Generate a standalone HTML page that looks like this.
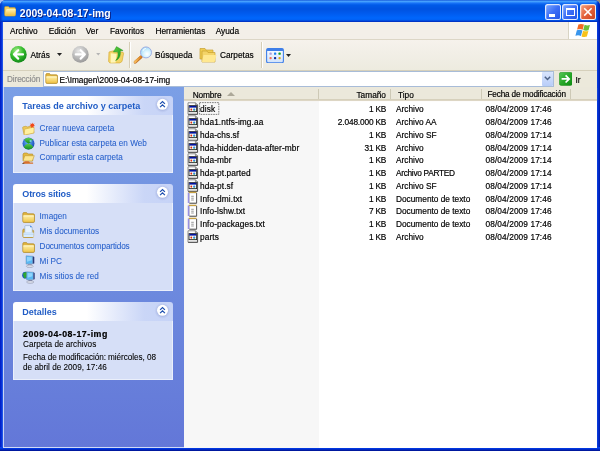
<!DOCTYPE html>
<html><head><meta charset="utf-8">
<style>
*{box-sizing:border-box}
html,body{margin:0;padding:0;width:600px;height:451px;overflow:hidden;background:linear-gradient(to right,#a8c0f0,#8c8c8c)}
body{position:relative;font-family:"Liberation Sans", sans-serif;-webkit-font-smoothing:antialiased}
.tx,.tt,.mt{-webkit-text-stroke:0.18px currentColor}
.lk{-webkit-text-stroke:0.06px currentColor}
.dt{-webkit-text-stroke:0.08px currentColor}
.a{position:absolute}
.win{position:absolute;left:0;top:0;width:600px;height:451px;will-change:transform;background:#0046d8;border-radius:6px 6px 0 0;overflow:hidden}
.title{position:absolute;left:0;top:0;width:600px;height:22px;
 background:linear-gradient(to bottom,#1a5edc 0px,#48a4ff 1.6px,#1a74f8 3px,#005ae8 5px,#0052e0 9px,#005cf0 14px,#0066fc 18px,#0060f4 20px,#0036c8 21.2px,#0030c0 22px)}
.ttext{position:absolute;left:19.8px;top:7.7px;font-size:10.4px;font-weight:bold;color:#fff;line-height:12px;text-shadow:1px 1px 0 #0a1e80;letter-spacing:0.05px}
.lb{position:absolute;left:0;top:22px;width:3px;height:429px;background:linear-gradient(to right,#0019c0,#0a3ce0 70%,#3a70f0)}
.rb{position:absolute;left:597px;top:22px;width:3px;height:429px;background:linear-gradient(to right,#0a40e0,#0028c8 60%,#001aa0)}
.bb{position:absolute;left:0;top:447px;width:600px;height:4px;background:linear-gradient(to bottom,#0a48f4,#0034dc 45%,#00108c)}
.menu{position:absolute;left:3px;top:22px;width:594px;height:17px;background:#f3efe8}
.menuline{position:absolute;left:3px;top:39px;width:594px;height:1px;background:#dcd6c6;box-shadow:0 1px 0 #fbf9f4}
.logo{position:absolute;left:568px;top:22px;width:29px;height:17px;background:#fff;border-left:1px solid #d8d4c4}
.mt{position:absolute;top:25px;font-size:8.3px;color:#000;line-height:12px}
.tool{position:absolute;left:3px;top:40px;width:594px;height:30px;background:linear-gradient(to bottom,#f6f2ec,#f2efe7 40%,#edebdf)}
.toolline{position:absolute;left:3px;top:69.5px;width:594px;height:1px;background:#d6d0bb}
.addr{position:absolute;left:3px;top:70.5px;width:594px;height:16.5px;background:#ece9db}
.abox{position:absolute;left:43px;top:71px;width:510.5px;height:15.5px;background:#fff;border:1px solid #a8bcd8}
.tt{position:absolute;font-size:8.3px;color:#000;line-height:12px}
.left{position:absolute;left:4px;top:87px;width:180px;height:360.5px;background:linear-gradient(to bottom,#7b9fe6,#7090e0 40%,#6377d8)}
.leftline{position:absolute;left:3px;top:87px;width:1px;height:361px;background:#c8d4f4}
.botline{position:absolute;left:3px;top:447px;width:181px;height:1px;background:#d0daf6}
.box{position:absolute;left:13px;width:160px;border-radius:3px 3px 0 0;overflow:hidden}
.bh{position:absolute;left:0;top:0;width:160px;height:19px;background:linear-gradient(to right,#fff 0%,#fff 46%,#cad6f7 82%,#c6d3f7 100%)}
.bt{position:absolute;left:9.3px;top:4.4px;font-size:9px;font-weight:bold;color:#215dc6;line-height:12px}
.bbody{position:absolute;left:0;top:19px;width:160px;background:#d6dff7;border:1px solid #eaeffb;border-top:none}
.chev{position:absolute;left:143.5px;top:3px;width:11.5px;height:11.5px;border-radius:50%;background:#fff;box-shadow:0 0.5px 1.5px rgba(80,100,170,.55)}
.lk{position:absolute;left:27px;font-size:8.2px;color:#2760cc;line-height:12px;white-space:nowrap}
.dt{position:absolute;left:10px;font-size:8.2px;color:#000;line-height:12px;white-space:nowrap}
.list{position:absolute;left:184px;top:87px;width:413px;height:360.5px;background:#fff}
.sortcol{position:absolute;left:184px;top:101px;width:135px;height:346.5px;background:#f7f7f7}
.hdr{position:absolute;left:184px;top:87px;width:413px;height:13.3px;background:#ebe8db;border-bottom:1px solid #d6d0bc;box-shadow:0 0.8px 0.6px #ddd6c4}
.hsep{position:absolute;top:89px;width:1px;height:10px;background:#cdc9b6}
.tx{position:absolute;font-size:8.3px;color:#000;line-height:12.75px;white-space:nowrap}
.r{text-align:right}
.ic{position:absolute;left:187.2px;width:12px;height:13px}
.ic svg{display:block}
.btn{position:absolute;top:4px;width:16px;height:16px;border-radius:2.5px;border:1px solid rgba(255,255,255,0.85);box-shadow:inset 0.5px 0.5px 0.5px rgba(255,255,255,0.35)}
</style></head><body>
<div class="win">
 <div class="title"></div>
 <div class="a" style="left:0;top:0;width:2.5px;height:22px;background:linear-gradient(to right,#0030c8,rgba(0,60,220,0))"></div>
 <div class="a" style="left:595.5px;top:0;width:4.5px;height:22px;background:linear-gradient(to right,rgba(0,40,200,0),#0028c0 60%,#0018a0)"></div>
 <div class="lb"></div><div class="rb"></div><div class="bb"></div>
 <!-- title icon -->
 <svg class="a" style="left:4.3px;top:6.3px" width="12" height="10.5" viewBox="0 0 12 10.5"><defs><linearGradient id="gtf" x1="0" y1="0" x2="0" y2="1"><stop offset="0" stop-color="#fff4b8"/><stop offset="1" stop-color="#f0c040"/></linearGradient></defs><path d="M0.6 8.8v-7.2q0-1.1 1-1.1h2.8l1 1.1h4.8q1.3 0 1.3 1.2v6q0 1.3-1.3 1.3h-8.3q-1.3 0-1.3-1.3z" fill="#f4d060" stroke="#c89a28" stroke-width="0.6"/><path d="M1.2 9.5l1-5.8q0.2-0.8 1-0.8h7.8q0.9 0 0.8 0.9l-0.6 5.7z" fill="url(#gtf)"/></svg>
 <div class="ttext">2009-04-08-17-img</div>
 <div class="btn" style="left:545px;background:linear-gradient(135deg,#7aa6ff,#3c6ef6 50%,#2456e6)"><div class="a" style="left:3.3px;top:9.2px;width:5.6px;height:2.4px;background:#fff"></div></div>
 <div class="btn" style="left:562px;background:linear-gradient(135deg,#7aa6ff,#3c6ef6 50%,#2456e6)"><div class="a" style="left:3px;top:2.5px;width:8.5px;height:8.5px;border:1px solid #fff;border-top-width:2px"></div></div>
 <div class="btn" style="left:580px;background:linear-gradient(135deg,#f4a07e,#e4623a 50%,#cc4420)"><svg class="a" style="left:2.3px;top:2.3px" width="10" height="10" viewBox="0 0 10 10"><path d="M1.2 1.2L8.6 8.6M8.6 1.2L1.2 8.6" stroke="#fff" stroke-width="1.5"/></svg></div>

 <div class="menu"></div><div class="menuline"></div><div class="logo"></div>
 <svg class="a" style="left:574px;top:23.3px" width="18" height="15" viewBox="0 0 18 15"><g transform="translate(2.6,0.3) scale(1.17,1.1) skewX(-14)"><path d="M1.8 1q2.2-1 4.8 0.2v4.6q-2.6-1.2-4.8-0.2z" fill="#f26a22"/><path d="M7.2 1.4q2.4 1.1 4.6 0.2v4.8q-2.2 0.9-4.6-0.2z" fill="#6cc03a"/><path d="M1.8 6.3q2.2-1 4.8 0.2v5q-2.6-1.2-4.8-0.2z" fill="#3a96ec"/><path d="M7.2 6.7q2.4 1.1 4.6 0.2v5.2q-2.2 0.9-4.6-0.2z" fill="#f8c21a"/></g></svg>
 <div class="mt" style="left:10px">Archivo</div>
 <div class="mt" style="left:48.7px">Edición</div>
 <div class="mt" style="left:85.7px">Ver</div>
 <div class="mt" style="left:110px">Favoritos</div>
 <div class="mt" style="left:155.5px">Herramientas</div>
 <div class="mt" style="left:215.7px">Ayuda</div>

 <div class="tool"></div><div class="toolline"></div>
 <!-- back -->
 <svg class="a" style="left:10px;top:46.3px" width="17" height="17" viewBox="0 0 17 17"><defs><radialGradient id="g1" cx="40%" cy="30%" r="70%"><stop offset="0" stop-color="#b0f090"/><stop offset="0.55" stop-color="#34bc2c"/><stop offset="1" stop-color="#128a18"/></radialGradient></defs><circle cx="8.4" cy="8.4" r="8.3" fill="url(#g1)"/><path d="M4 8.4h9M4 8.4l4.2-4.2M4 8.4l4.2 4.2" stroke="#fff" stroke-width="2.2" stroke-linecap="round" stroke-linejoin="round" fill="none"/></svg>
 <div class="tt" style="left:30.5px;top:49px">Atrás</div>
 <svg class="a" style="left:57px;top:53px" width="5" height="3" viewBox="0 0 5 3"><path d="M0 0h5l-2.5 3z" fill="#222"/></svg>
 <svg class="a" style="left:72.3px;top:46.3px" width="17" height="17" viewBox="0 0 17 17"><defs><radialGradient id="g2" cx="40%" cy="30%" r="70%"><stop offset="0" stop-color="#e8e8e8"/><stop offset="0.6" stop-color="#b8b8b8"/><stop offset="1" stop-color="#9a9a9a"/></radialGradient></defs><circle cx="8.4" cy="8.4" r="8.3" fill="url(#g2)"/><path d="M12.8 8.4h-9M12.8 8.4l-4.2-4.2M12.8 8.4l-4.2 4.2" stroke="#fff" stroke-width="2.2" stroke-linecap="round" stroke-linejoin="round" fill="none"/></svg>
 <svg class="a" style="left:96px;top:53px" width="4.5" height="2.5" viewBox="0 0 5 3"><path d="M0 0h5l-2.5 3z" fill="#b4b4b4"/></svg>
 <!-- up folder -->
 <svg class="a" style="left:104px;top:42px" width="24" height="24" viewBox="0 0 24 24"><defs><linearGradient id="gup" x1="0" y1="0" x2="1" y2="1"><stop offset="0" stop-color="#60d040"/><stop offset="1" stop-color="#129018"/></linearGradient></defs><path d="M5 10l4.5-1.2 3.5 1.5 5.8-0.2 0.8 1.2-1.6 8.2-2.2 1.4h-10l-1.2-1.4z" fill="#f2d464" stroke="#d8ac38" stroke-width="0.7"/><path d="M6.8 11.2l5.8 0.8-1 8.6-5 0.1z" fill="#fff6b8"/><path d="M11.6 18.6c2.4-2.6 2.9-5.4 2.1-8.8l-4.3 0.2 3.1-5.4 6.6 3.9-2.8 0.5c0.5 4.4-0.9 8.2-4.7 9.6z" fill="url(#gup)" stroke="#1a8a1a" stroke-width="0.4"/></svg>
 <div class="a" style="left:129px;top:42px;width:1px;height:26px;background:#d6ceb6;box-shadow:1px 0 0 #fff"></div>
 <!-- search -->
 <svg class="a" style="left:130px;top:42px" width="24" height="24" viewBox="0 0 24 24"><defs><radialGradient id="gls" cx="60%" cy="65%" r="60%"><stop offset="0" stop-color="#ffffff"/><stop offset="0.5" stop-color="#d8f4ff"/><stop offset="1" stop-color="#a8dcf8"/></radialGradient><linearGradient id="ghd" x1="0" y1="0" x2="1" y2="0"><stop offset="0" stop-color="#f8c060"/><stop offset="1" stop-color="#d88020"/></linearGradient></defs><path d="M5.2 20.2l6-5.4" stroke="#c07028" stroke-width="3" stroke-linecap="round"/><path d="M5 20l6-5.4" stroke="url(#ghd)" stroke-width="2" stroke-linecap="round"/><circle cx="16" cy="10.4" r="5.5" fill="url(#gls)" stroke="#98a8e0" stroke-width="0.9"/><path d="M12.8 9.2a3.5 3.5 0 0 1 3-2.8" stroke="#fff" stroke-width="1" fill="none"/></svg>
 <div class="tt" style="left:155px;top:49px">Búsqueda</div>
 <!-- folders -->
 <svg class="a" style="left:199px;top:47px" width="18" height="16" viewBox="0 0 18 16"><path d="M1 1.5h5l1 1.5h7v9h-13z" fill="#f0cc50" stroke="#c8a030" stroke-width="0.7"/><path d="M3 4h5l1 1.5h7v9.5h-13z" fill="#f4d468" stroke="#c8a030" stroke-width="0.7"/><path d="M4.5 8h13l-2 7h-12.5z" fill="#ffe890"/></svg>
 <div class="tt" style="left:220px;top:49px">Carpetas</div>
 <div class="a" style="left:261px;top:42px;width:1px;height:26px;background:#d6ceb6;box-shadow:1px 0 0 #fff"></div>
 <!-- views -->
 <svg class="a" style="left:266px;top:47.5px" width="18" height="15.5" viewBox="0 0 18 15.5"><defs><linearGradient id="gvw" x1="0" y1="0" x2="0" y2="1"><stop offset="0" stop-color="#ffffff"/><stop offset="1" stop-color="#cfe2fb"/></linearGradient></defs><rect x="0.6" y="0.6" width="16.8" height="14.3" rx="1.8" fill="url(#gvw)" stroke="#3f7fe8" stroke-width="1.1"/><rect x="0.6" y="0.6" width="16.8" height="2.4" rx="1" fill="#3f7fe8"/><rect x="3.5" y="4.6" width="2.2" height="2.2" rx="0.6" fill="#a8a0e0"/><rect x="8" y="4.6" width="2.2" height="2.2" rx="0.6" fill="#1a80f0"/><rect x="12.5" y="4.6" width="2.2" height="2.2" rx="0.6" fill="#12a020"/><rect x="3.5" y="9" width="2.2" height="2.2" rx="0.8" fill="#f87050"/><rect x="8" y="9" width="2.2" height="2.2" rx="0.8" fill="#0a2a98"/><rect x="12.5" y="9" width="2.2" height="2.2" rx="0.8" fill="#e0a818"/></svg>
 <svg class="a" style="left:285.5px;top:53.5px" width="5" height="3" viewBox="0 0 5 3"><path d="M0 0h5l-2.5 3z" fill="#222"/></svg>

 <div class="addr"></div>
 <div class="tt" style="left:7px;top:74px;color:#8e8e8e;font-size:8.2px;letter-spacing:-0.1px">Dirección</div>
 <div class="abox"></div>
 <svg class="a" style="left:44.5px;top:73.3px" width="13" height="11" viewBox="0 0 13 11"><defs><linearGradient id="gaf" x1="0" y1="0" x2="0" y2="1"><stop offset="0" stop-color="#fff2b0"/><stop offset="1" stop-color="#f0c448"/></linearGradient></defs><path d="M0.8 9.2v-7.4q0-1.2 1-1.2h2.8l1 1.2h5.6q1.3 0 1.3 1.2v6.2q0 1.3-1.3 1.3h-9.1q-1.3 0-1.3-1.3z" fill="#e0b440" stroke="#b08a28" stroke-width="0.7"/><rect x="1.3" y="3.2" width="10.6" height="6.6" rx="0.8" fill="url(#gaf)"/><path d="M1.3 4h10.6" stroke="#fff8d0" stroke-width="0.8"/></svg>
 <div class="tt" style="left:59.5px;top:73.6px">E:\Imagen\2009-04-08-17-img</div>
 <div class="a" style="left:541.5px;top:72px;width:11px;height:13.5px;background:linear-gradient(to bottom,#d8e4fc,#b8cdf8);border-radius:1px"></div>
 <svg class="a" style="left:544px;top:76px" width="7" height="5" viewBox="0 0 7 5"><path d="M0.8 0.8l2.7 2.7 2.7-2.7" stroke="#4d6185" stroke-width="1.5" fill="none"/></svg>
 <svg class="a" style="left:558.7px;top:72px" width="13.6" height="13.8" viewBox="0 0 13.6 13.8"><defs><linearGradient id="ggo" x1="0" y1="0" x2="1" y2="1"><stop offset="0" stop-color="#58c858"/><stop offset="0.5" stop-color="#28a828"/><stop offset="1" stop-color="#0a8a10"/></linearGradient></defs><rect x="0.3" y="0.3" width="13" height="13.2" rx="2" fill="url(#ggo)" stroke="#1a8a1a" stroke-width="0.5"/><path d="M2.6 6.9h7.6M6.6 3.3l3.6 3.6-3.6 3.6" stroke="#fff" stroke-width="1.7" fill="none"/></svg>
 <div class="tt" style="left:575.5px;top:73.6px">Ir</div>

 <div class="left"></div><div class="leftline"></div><div class="botline"></div>

 <div class="box" style="top:96px;height:77px">
  <div class="bh"></div><div class="bt">Tareas de archivo y carpeta</div>
  <svg class="a" style="left:135.5px;top:-3px" width="26" height="26" viewBox="0 0 26 26"><defs><radialGradient id="gc" cx="50%" cy="50%" r="50%"><stop offset="0.6" stop-color="#a8b6e2" stop-opacity="1"/><stop offset="1" stop-color="#b8c4ec" stop-opacity="0"/></radialGradient></defs><circle cx="13.5" cy="11.8" r="8.2" fill="url(#gc)"/><circle cx="13.5" cy="11.3" r="5.5" fill="#fff"/><path d="M11.1 10.9l2.4-2.3 2.4 2.3M11.1 14.1l2.4-2.3 2.4 2.3" stroke="#1f50b0" stroke-width="1.25" fill="none"/></svg>
  <div class="bbody" style="height:58px"></div>
 </div>
 <div class="a" style="left:22px;top:122.3px;line-height:0"><svg width="14" height="13" viewBox="0 0 14 13"><g transform="rotate(-12 6 8) translate(-0.3 0.4)"><path d="M1.5 11.5v-7q0-1 1-1h2.6l1 1h4.5q1 0 1 1v6z" fill="#ecc858" stroke="#c8a038" stroke-width="0.6"/><path d="M1.5 11.8l1.6-5.2q0.2-0.6 0.9-0.6h8.2q0.8 0 0.6 0.7l-1.4 5.1z" fill="#fff0a0" stroke="#d0a840" stroke-width="0.5"/></g><path d="M10.2 0.4l0.7 1.7 1.7-0.6-0.9 1.6 1.5 0.9-1.8 0.3 0.2 1.8-1.3-1.2-1.3 1.2 0.2-1.8-1.8-0.3 1.5-0.9-0.9-1.6 1.7 0.6z" fill="#f24818"/></svg></div>
 <div class="lk" style="left:39.6px;top:123.00px;">Crear nueva carpeta</div>
 <div class="a" style="left:22px;top:137px;line-height:0"><svg width="13" height="13" viewBox="0 0 13 13"><defs><radialGradient id="gw" cx="45%" cy="40%" r="60%"><stop offset="0" stop-color="#6ab8ff"/><stop offset="1" stop-color="#1848b8"/></radialGradient><linearGradient id="gwg" x1="0" y1="0" x2="0" y2="1"><stop offset="0" stop-color="#60d050"/><stop offset="1" stop-color="#108a20"/></linearGradient></defs><circle cx="6.5" cy="6.5" r="6" fill="url(#gw)"/><path d="M2.2 2.4q4.3-3.2 8.6 0q-1.2 2.6-4.3 4.4q-3.1-1.8-4.3-4.4z" fill="url(#gwg)"/><path d="M1.6 10q1.5-2.8 4.9-3.6q3.4 0.8 4.9 3.6q-2 2.6-4.9 2.6q-2.9 0-4.9-2.6z" fill="url(#gwg)"/><ellipse cx="8.6" cy="4" rx="1.2" ry="0.9" fill="#7ac8ff" opacity="0.9"/></svg></div>
 <div class="lk" style="left:39.6px;top:137.60px;">Publicar esta carpeta en Web</div>
 <div class="a" style="left:22px;top:151.5px;line-height:0"><svg width="13" height="12" viewBox="0 0 13 12"><path d="M1 8.5v-6.5l1-1h3.2l1 1h4.5v7z" fill="#e4b840" stroke="#b08a28" stroke-width="0.6"/><path d="M1 9l1.8-5.3h9.5l-2 5.3z" fill="#fce690" stroke="#c09a38" stroke-width="0.6"/><path d="M0.3 11.8q1-2.2 3-2.5h3.2q1 0.3 1.5 1.2h3q0.5 0.8 0 1.3z" fill="#d8702a"/><path d="M0.3 11.8h2" stroke="#303030" stroke-width="0.8"/></svg></div>
 <div class="lk" style="left:39.6px;top:152.40px;">Compartir esta carpeta</div>
 <div class="box" style="top:184px;height:107px">
  <div class="bh"></div><div class="bt" style="letter-spacing:-0.12px">Otros sitios</div>
  <svg class="a" style="left:135.5px;top:-3px" width="26" height="26" viewBox="0 0 26 26"><defs><radialGradient id="gc" cx="50%" cy="50%" r="50%"><stop offset="0.6" stop-color="#a8b6e2" stop-opacity="1"/><stop offset="1" stop-color="#b8c4ec" stop-opacity="0"/></radialGradient></defs><circle cx="13.5" cy="11.8" r="8.2" fill="url(#gc)"/><circle cx="13.5" cy="11.3" r="5.5" fill="#fff"/><path d="M11.1 10.9l2.4-2.3 2.4 2.3M11.1 14.1l2.4-2.3 2.4 2.3" stroke="#1f50b0" stroke-width="1.25" fill="none"/></svg>
  <div class="bbody" style="height:88px"></div>
 </div>
 <div class="a" style="left:22px;top:211.5px;line-height:0"><svg width="13" height="11" viewBox="0 0 13 11"><defs><linearGradient id="gf" x1="0" y1="0" x2="0" y2="1"><stop offset="0" stop-color="#fff0a8"/><stop offset="1" stop-color="#f0c850"/></linearGradient></defs><path d="M0.8 9.2v-7.4q0-1.2 1-1.2h2.8l1 1.2h5.6q1.3 0 1.3 1.2v6.2q0 1.3-1.3 1.3h-9.1q-1.3 0-1.3-1.3z" fill="#e0b440" stroke="#b08a28" stroke-width="0.7"/><rect x="1.3" y="3.2" width="10.6" height="6.6" rx="0.8" fill="url(#gf)"/><path d="M1.3 4h10.6" stroke="#fff8d0" stroke-width="0.8"/></svg></div>
 <div class="lk" style="left:39.6px;top:211.20px;">Imagen</div>
 <div class="a" style="left:22px;top:224.7px;line-height:0"><svg width="13" height="13" viewBox="0 0 13 13"><path d="M0.8 11.2v-6q0-1.2 1-1.2h1l0.5 1h7q1.3 0 1.3 1.2v5q0 1.3-1.3 1.3h-8.2q-1.3 0-1.3-1.3z" fill="#e0b440" stroke="#b08a28" stroke-width="0.7"/><path d="M2.8 8v-6.6q0-0.8 0.8-0.8h4.6l2 1.6v5.8z" fill="#e6f2ff" stroke="#90a8c8" stroke-width="0.6"/><path d="M8.2 0.6l2 1.6h-2z" fill="#2a7ae8"/><rect x="1.4" y="7.6" width="10.3" height="4.4" rx="0.5" fill="#d8ecff"/><path d="M1.4 9.2h10.3" stroke="#a8c8ec" stroke-width="0.6"/></svg></div>
 <div class="lk" style="left:39.6px;top:226.10px;">Mis documentos</div>
 <div class="a" style="left:22px;top:241.5px;line-height:0"><svg width="13" height="11" viewBox="0 0 13 11"><defs><linearGradient id="gf" x1="0" y1="0" x2="0" y2="1"><stop offset="0" stop-color="#fff0a8"/><stop offset="1" stop-color="#f0c850"/></linearGradient></defs><path d="M0.8 9.2v-7.4q0-1.2 1-1.2h2.8l1 1.2h5.6q1.3 0 1.3 1.2v6.2q0 1.3-1.3 1.3h-9.1q-1.3 0-1.3-1.3z" fill="#e0b440" stroke="#b08a28" stroke-width="0.7"/><rect x="1.3" y="3.2" width="10.6" height="6.6" rx="0.8" fill="url(#gf)"/><path d="M1.3 4h10.6" stroke="#fff8d0" stroke-width="0.8"/></svg></div>
 <div class="lk" style="left:39.6px;top:241.10px;letter-spacing:-0.13px;">Documentos compartidos</div>
 <div class="a" style="left:24.5px;top:255px;line-height:0"><svg width="10" height="13" viewBox="0 0 10 13"><path d="M1 0.8l6.8 0.4v7.6l-6.8 0.3z" fill="#58b8f4" stroke="#7890b0" stroke-width="0.5"/><path d="M7.8 1.2l1.5 0.8v6.6l-1.5 0.2z" fill="#283878"/><path d="M2 2l4.8 0.2v3l-4.8 1.5z" fill="#a8e0ff" opacity="0.7"/><path d="M3 9.2h3.6l0.5 1.2h-4.6z" fill="#8088a8"/><ellipse cx="4.8" cy="11.3" rx="3.5" ry="1.3" fill="#d8dce8" stroke="#8890a8" stroke-width="0.5"/></svg></div>
 <div class="lk" style="left:39.6px;top:256.00px;">Mi PC</div>
 <div class="a" style="left:22px;top:269.5px;line-height:0"><svg width="13" height="14" viewBox="0 0 13 14"><circle cx="3.6" cy="5.2" r="3.4" fill="#1a58c0"/><path d="M1 3.5q1.5-1.8 4-1.5q1.5 1 1 3.5q-2 1-3 3.2q-1.8-1.5-2-5.2z" fill="#2ea830"/><path d="M4.6 1.8l6.8 0.4v7.4l-6.8 0.3z" fill="#58b8f4" stroke="#7890b0" stroke-width="0.5"/><path d="M11.4 2.2l1.3 0.7v6.4l-1.3 0.2z" fill="#283878"/><path d="M5.6 3l4.8 0.2v3l-4.8 1.5z" fill="#a8e0ff" opacity="0.7"/><ellipse cx="8.2" cy="12" rx="3.6" ry="1.4" fill="#d8dce8" stroke="#8890a8" stroke-width="0.5"/><path d="M6.6 10h3.4l0.4 1h-4.2z" fill="#8088a8"/></svg></div>
 <div class="lk" style="left:39.6px;top:270.90px;">Mis sitios de red</div>
 <div class="box" style="top:302px;height:78px">
  <div class="bh"></div><div class="bt">Detalles</div>
  <svg class="a" style="left:135.5px;top:-3px" width="26" height="26" viewBox="0 0 26 26"><defs><radialGradient id="gc" cx="50%" cy="50%" r="50%"><stop offset="0.6" stop-color="#a8b6e2" stop-opacity="1"/><stop offset="1" stop-color="#b8c4ec" stop-opacity="0"/></radialGradient></defs><circle cx="13.5" cy="11.8" r="8.2" fill="url(#gc)"/><circle cx="13.5" cy="11.3" r="5.5" fill="#fff"/><path d="M11.1 10.9l2.4-2.3 2.4 2.3M11.1 14.1l2.4-2.3 2.4 2.3" stroke="#1f50b0" stroke-width="1.25" fill="none"/></svg>
  <div class="bbody" style="height:59px"></div>
 </div>
 <div class="dt" style="left:23px;top:328.4px;font-weight:bold;font-size:8.8px;letter-spacing:0.5px;-webkit-text-stroke:0.2px #000">2009-04-08-17-img</div>
 <div class="dt" style="left:23px;top:338.6px">Carpeta de archivos</div>
 <div class="dt" style="left:23px;top:351.8px;font-size:8.2px;letter-spacing:-0.06px">Fecha de modificación: miércoles, 08</div>
 <div class="dt" style="left:23px;top:362.2px">de abril de 2009, 17:46</div>

 <div class="list"></div>
 <div class="sortcol"></div>
 <div class="hdr"></div>
 <div class="hsep" style="left:317.5px"></div>
 <div class="hsep" style="left:390px"></div>
 <div class="hsep" style="left:481px"></div>
 <div class="hsep" style="left:570px"></div>
 <div class="tt" style="left:192.7px;top:88.5px;letter-spacing:-0.12px">Nombre</div>
 <svg class="a" style="left:227px;top:91.5px" width="8" height="4" viewBox="0 0 8 4"><path d="M0 4h8l-4-4z" fill="#aca899"/></svg>
 <div class="tt" style="right:214px;top:88.5px">Tamaño</div>
 <div class="tt" style="left:398px;top:88.5px">Tipo</div>
 <div class="tt" style="left:487.5px;top:88.5px;font-size:8.2px;letter-spacing:-0.17px">Fecha de modificación</div>
 <div class="ic" style="top:102.05px"><svg width="12" height="13" viewBox="0 0 12 13"><path d="M1 0.8h7.6l1.8 1.8v9.6h-9.4z" fill="#fff" stroke="#808080" stroke-width="0.9"/><path d="M1.2 12.4h9.4M10.6 2.8v9.5" stroke="#4a4a4a" stroke-width="0.9"/><path d="M8.4 0.8v2h2" fill="#d0d0d0" stroke="#606060" stroke-width="0.6"/><rect x="2" y="3.6" width="7.6" height="6" fill="#f6f8f0" stroke="#202020" stroke-width="0.8"/><rect x="2.3" y="3.9" width="7" height="1.7" fill="#0012a0"/><ellipse cx="4.3" cy="7.6" rx="0.9" ry="1.1" fill="#e03010"/><circle cx="7.2" cy="7.5" r="1.1" fill="#2a80f0"/><path d="M6.5 8.3a1 1 0 0 0 1.6 0.2" stroke="#20a030" stroke-width="0.7" fill="none"/><path d="M2.2 10.8h7.4" stroke="#c8c8c8" stroke-width="0.7"/></svg></div>
<div class="tx" style="left:200px;top:103.40px;letter-spacing:0.1px">disk</div>
<div class="tx r" style="right:213.85px;top:103.40px;letter-spacing:-0.15px;word-spacing:-0.2px">1 KB</div>
<div class="tx" style="left:396px;top:103.40px;">Archivo</div>
<div class="tx" style="left:485.5px;top:103.40px;letter-spacing:0.1px">08/04/2009 17:46</div>
<div class="ic" style="top:114.80px"><svg width="12" height="13" viewBox="0 0 12 13"><path d="M1 0.8h7.6l1.8 1.8v9.6h-9.4z" fill="#fff" stroke="#808080" stroke-width="0.9"/><path d="M1.2 12.4h9.4M10.6 2.8v9.5" stroke="#4a4a4a" stroke-width="0.9"/><path d="M8.4 0.8v2h2" fill="#d0d0d0" stroke="#606060" stroke-width="0.6"/><rect x="2" y="3.6" width="7.6" height="6" fill="#f6f8f0" stroke="#202020" stroke-width="0.8"/><rect x="2.3" y="3.9" width="7" height="1.7" fill="#0012a0"/><ellipse cx="4.3" cy="7.6" rx="0.9" ry="1.1" fill="#e03010"/><circle cx="7.2" cy="7.5" r="1.1" fill="#2a80f0"/><path d="M6.5 8.3a1 1 0 0 0 1.6 0.2" stroke="#20a030" stroke-width="0.7" fill="none"/><path d="M2.2 10.8h7.4" stroke="#c8c8c8" stroke-width="0.7"/></svg></div>
<div class="tx" style="left:200px;top:116.15px;letter-spacing:0.1px">hda1.ntfs-img.aa</div>
<div class="tx r" style="right:213.85px;top:116.15px;letter-spacing:-0.15px;word-spacing:-0.2px">2.048.000 KB</div>
<div class="tx" style="left:396px;top:116.15px;">Archivo AA</div>
<div class="tx" style="left:485.5px;top:116.15px;letter-spacing:0.1px">08/04/2009 17:46</div>
<div class="ic" style="top:127.55px"><svg width="12" height="13" viewBox="0 0 12 13"><path d="M1 0.8h7.6l1.8 1.8v9.6h-9.4z" fill="#fff" stroke="#808080" stroke-width="0.9"/><path d="M1.2 12.4h9.4M10.6 2.8v9.5" stroke="#4a4a4a" stroke-width="0.9"/><path d="M8.4 0.8v2h2" fill="#d0d0d0" stroke="#606060" stroke-width="0.6"/><rect x="2" y="3.6" width="7.6" height="6" fill="#f6f8f0" stroke="#202020" stroke-width="0.8"/><rect x="2.3" y="3.9" width="7" height="1.7" fill="#0012a0"/><ellipse cx="4.3" cy="7.6" rx="0.9" ry="1.1" fill="#e03010"/><circle cx="7.2" cy="7.5" r="1.1" fill="#2a80f0"/><path d="M6.5 8.3a1 1 0 0 0 1.6 0.2" stroke="#20a030" stroke-width="0.7" fill="none"/><path d="M2.2 10.8h7.4" stroke="#c8c8c8" stroke-width="0.7"/></svg></div>
<div class="tx" style="left:200px;top:128.90px;letter-spacing:0.1px">hda-chs.sf</div>
<div class="tx r" style="right:213.85px;top:128.90px;letter-spacing:-0.15px;word-spacing:-0.2px">1 KB</div>
<div class="tx" style="left:396px;top:128.90px;">Archivo SF</div>
<div class="tx" style="left:485.5px;top:128.90px;letter-spacing:0.1px">08/04/2009 17:14</div>
<div class="ic" style="top:140.30px"><svg width="12" height="13" viewBox="0 0 12 13"><path d="M1 0.8h7.6l1.8 1.8v9.6h-9.4z" fill="#fff" stroke="#808080" stroke-width="0.9"/><path d="M1.2 12.4h9.4M10.6 2.8v9.5" stroke="#4a4a4a" stroke-width="0.9"/><path d="M8.4 0.8v2h2" fill="#d0d0d0" stroke="#606060" stroke-width="0.6"/><rect x="2" y="3.6" width="7.6" height="6" fill="#f6f8f0" stroke="#202020" stroke-width="0.8"/><rect x="2.3" y="3.9" width="7" height="1.7" fill="#0012a0"/><ellipse cx="4.3" cy="7.6" rx="0.9" ry="1.1" fill="#e03010"/><circle cx="7.2" cy="7.5" r="1.1" fill="#2a80f0"/><path d="M6.5 8.3a1 1 0 0 0 1.6 0.2" stroke="#20a030" stroke-width="0.7" fill="none"/><path d="M2.2 10.8h7.4" stroke="#c8c8c8" stroke-width="0.7"/></svg></div>
<div class="tx" style="left:200px;top:141.65px;letter-spacing:0.1px">hda-hidden-data-after-mbr</div>
<div class="tx r" style="right:213.85px;top:141.65px;letter-spacing:-0.15px;word-spacing:-0.2px">31 KB</div>
<div class="tx" style="left:396px;top:141.65px;">Archivo</div>
<div class="tx" style="left:485.5px;top:141.65px;letter-spacing:0.1px">08/04/2009 17:14</div>
<div class="ic" style="top:153.05px"><svg width="12" height="13" viewBox="0 0 12 13"><path d="M1 0.8h7.6l1.8 1.8v9.6h-9.4z" fill="#fff" stroke="#808080" stroke-width="0.9"/><path d="M1.2 12.4h9.4M10.6 2.8v9.5" stroke="#4a4a4a" stroke-width="0.9"/><path d="M8.4 0.8v2h2" fill="#d0d0d0" stroke="#606060" stroke-width="0.6"/><rect x="2" y="3.6" width="7.6" height="6" fill="#f6f8f0" stroke="#202020" stroke-width="0.8"/><rect x="2.3" y="3.9" width="7" height="1.7" fill="#0012a0"/><ellipse cx="4.3" cy="7.6" rx="0.9" ry="1.1" fill="#e03010"/><circle cx="7.2" cy="7.5" r="1.1" fill="#2a80f0"/><path d="M6.5 8.3a1 1 0 0 0 1.6 0.2" stroke="#20a030" stroke-width="0.7" fill="none"/><path d="M2.2 10.8h7.4" stroke="#c8c8c8" stroke-width="0.7"/></svg></div>
<div class="tx" style="left:200px;top:154.40px;letter-spacing:0.1px">hda-mbr</div>
<div class="tx r" style="right:213.85px;top:154.40px;letter-spacing:-0.15px;word-spacing:-0.2px">1 KB</div>
<div class="tx" style="left:396px;top:154.40px;">Archivo</div>
<div class="tx" style="left:485.5px;top:154.40px;letter-spacing:0.1px">08/04/2009 17:14</div>
<div class="ic" style="top:165.80px"><svg width="12" height="13" viewBox="0 0 12 13"><path d="M1 0.8h7.6l1.8 1.8v9.6h-9.4z" fill="#fff" stroke="#808080" stroke-width="0.9"/><path d="M1.2 12.4h9.4M10.6 2.8v9.5" stroke="#4a4a4a" stroke-width="0.9"/><path d="M8.4 0.8v2h2" fill="#d0d0d0" stroke="#606060" stroke-width="0.6"/><rect x="2" y="3.6" width="7.6" height="6" fill="#f6f8f0" stroke="#202020" stroke-width="0.8"/><rect x="2.3" y="3.9" width="7" height="1.7" fill="#0012a0"/><ellipse cx="4.3" cy="7.6" rx="0.9" ry="1.1" fill="#e03010"/><circle cx="7.2" cy="7.5" r="1.1" fill="#2a80f0"/><path d="M6.5 8.3a1 1 0 0 0 1.6 0.2" stroke="#20a030" stroke-width="0.7" fill="none"/><path d="M2.2 10.8h7.4" stroke="#c8c8c8" stroke-width="0.7"/></svg></div>
<div class="tx" style="left:200px;top:167.15px;letter-spacing:0.1px">hda-pt.parted</div>
<div class="tx r" style="right:213.85px;top:167.15px;letter-spacing:-0.15px;word-spacing:-0.2px">1 KB</div>
<div class="tx" style="left:396px;top:167.15px;letter-spacing:-0.3px;">Archivo PARTED</div>
<div class="tx" style="left:485.5px;top:167.15px;letter-spacing:0.1px">08/04/2009 17:14</div>
<div class="ic" style="top:178.55px"><svg width="12" height="13" viewBox="0 0 12 13"><path d="M1 0.8h7.6l1.8 1.8v9.6h-9.4z" fill="#fff" stroke="#808080" stroke-width="0.9"/><path d="M1.2 12.4h9.4M10.6 2.8v9.5" stroke="#4a4a4a" stroke-width="0.9"/><path d="M8.4 0.8v2h2" fill="#d0d0d0" stroke="#606060" stroke-width="0.6"/><rect x="2" y="3.6" width="7.6" height="6" fill="#f6f8f0" stroke="#202020" stroke-width="0.8"/><rect x="2.3" y="3.9" width="7" height="1.7" fill="#0012a0"/><ellipse cx="4.3" cy="7.6" rx="0.9" ry="1.1" fill="#e03010"/><circle cx="7.2" cy="7.5" r="1.1" fill="#2a80f0"/><path d="M6.5 8.3a1 1 0 0 0 1.6 0.2" stroke="#20a030" stroke-width="0.7" fill="none"/><path d="M2.2 10.8h7.4" stroke="#c8c8c8" stroke-width="0.7"/></svg></div>
<div class="tx" style="left:200px;top:179.90px;letter-spacing:0.1px">hda-pt.sf</div>
<div class="tx r" style="right:213.85px;top:179.90px;letter-spacing:-0.15px;word-spacing:-0.2px">1 KB</div>
<div class="tx" style="left:396px;top:179.90px;">Archivo SF</div>
<div class="tx" style="left:485.5px;top:179.90px;letter-spacing:0.1px">08/04/2009 17:14</div>
<div class="ic" style="top:191.30px"><svg width="12" height="13" viewBox="0 0 12 13"><path d="M2.2 1.8h7.4v10.2h-7.4z" fill="#fff" stroke="#9a9a9a" stroke-width="0.6"/><path d="M9.6 2v10.3h-7.2" stroke="#505050" stroke-width="0.9" fill="none"/><path d="M1.5 1.5v10.5" stroke="#9890e0" stroke-width="1.5"/><path d="M1.8 1.3h7.6" stroke="#c8a040" stroke-width="1.3"/><path d="M4.2 5.3h2.6M4.2 7.2h2.6M4.2 9h2.6" stroke="#808080" stroke-width="0.8"/></svg></div>
<div class="tx" style="left:200px;top:192.65px;letter-spacing:0.1px">Info-dmi.txt</div>
<div class="tx r" style="right:213.85px;top:192.65px;letter-spacing:-0.15px;word-spacing:-0.2px">1 KB</div>
<div class="tx" style="left:396px;top:192.65px;">Documento de texto</div>
<div class="tx" style="left:485.5px;top:192.65px;letter-spacing:0.1px">08/04/2009 17:46</div>
<div class="ic" style="top:204.05px"><svg width="12" height="13" viewBox="0 0 12 13"><path d="M2.2 1.8h7.4v10.2h-7.4z" fill="#fff" stroke="#9a9a9a" stroke-width="0.6"/><path d="M9.6 2v10.3h-7.2" stroke="#505050" stroke-width="0.9" fill="none"/><path d="M1.5 1.5v10.5" stroke="#9890e0" stroke-width="1.5"/><path d="M1.8 1.3h7.6" stroke="#c8a040" stroke-width="1.3"/><path d="M4.2 5.3h2.6M4.2 7.2h2.6M4.2 9h2.6" stroke="#808080" stroke-width="0.8"/></svg></div>
<div class="tx" style="left:200px;top:205.40px;letter-spacing:0.1px">Info-lshw.txt</div>
<div class="tx r" style="right:213.85px;top:205.40px;letter-spacing:-0.15px;word-spacing:-0.2px">7 KB</div>
<div class="tx" style="left:396px;top:205.40px;">Documento de texto</div>
<div class="tx" style="left:485.5px;top:205.40px;letter-spacing:0.1px">08/04/2009 17:46</div>
<div class="ic" style="top:216.80px"><svg width="12" height="13" viewBox="0 0 12 13"><path d="M2.2 1.8h7.4v10.2h-7.4z" fill="#fff" stroke="#9a9a9a" stroke-width="0.6"/><path d="M9.6 2v10.3h-7.2" stroke="#505050" stroke-width="0.9" fill="none"/><path d="M1.5 1.5v10.5" stroke="#9890e0" stroke-width="1.5"/><path d="M1.8 1.3h7.6" stroke="#c8a040" stroke-width="1.3"/><path d="M4.2 5.3h2.6M4.2 7.2h2.6M4.2 9h2.6" stroke="#808080" stroke-width="0.8"/></svg></div>
<div class="tx" style="left:200px;top:218.15px;letter-spacing:0.1px">Info-packages.txt</div>
<div class="tx r" style="right:213.85px;top:218.15px;letter-spacing:-0.15px;word-spacing:-0.2px">1 KB</div>
<div class="tx" style="left:396px;top:218.15px;">Documento de texto</div>
<div class="tx" style="left:485.5px;top:218.15px;letter-spacing:0.1px">08/04/2009 17:46</div>
<div class="ic" style="top:229.55px"><svg width="12" height="13" viewBox="0 0 12 13"><path d="M1 0.8h7.6l1.8 1.8v9.6h-9.4z" fill="#fff" stroke="#808080" stroke-width="0.9"/><path d="M1.2 12.4h9.4M10.6 2.8v9.5" stroke="#4a4a4a" stroke-width="0.9"/><path d="M8.4 0.8v2h2" fill="#d0d0d0" stroke="#606060" stroke-width="0.6"/><rect x="2" y="3.6" width="7.6" height="6" fill="#f6f8f0" stroke="#202020" stroke-width="0.8"/><rect x="2.3" y="3.9" width="7" height="1.7" fill="#0012a0"/><ellipse cx="4.3" cy="7.6" rx="0.9" ry="1.1" fill="#e03010"/><circle cx="7.2" cy="7.5" r="1.1" fill="#2a80f0"/><path d="M6.5 8.3a1 1 0 0 0 1.6 0.2" stroke="#20a030" stroke-width="0.7" fill="none"/><path d="M2.2 10.8h7.4" stroke="#c8c8c8" stroke-width="0.7"/></svg></div>
<div class="tx" style="left:200px;top:230.90px;letter-spacing:0.1px">parts</div>
<div class="tx r" style="right:213.85px;top:230.90px;letter-spacing:-0.15px;word-spacing:-0.2px">1 KB</div>
<div class="tx" style="left:396px;top:230.90px;">Archivo</div>
<div class="tx" style="left:485.5px;top:230.90px;letter-spacing:0.1px">08/04/2009 17:46</div>
 <svg class="a" style="left:199px;top:102px" width="20.5" height="13" viewBox="0 0 20.5 13"><rect x="0.6" y="0.6" width="19.2" height="11.8" fill="none" stroke="#707070" stroke-width="0.9" stroke-dasharray="1.6 0.9"/></svg>
</div>
</body></html>
